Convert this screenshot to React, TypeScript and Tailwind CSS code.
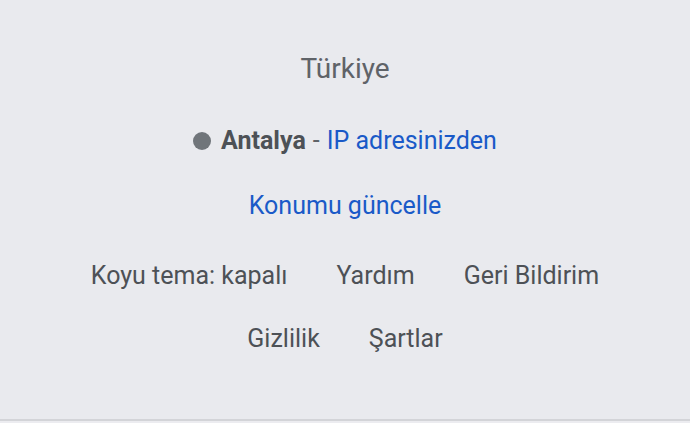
export default function App() {
  return (
    <div className="h-[423px] w-[690px] bg-[#ececf0] font-['Roboto',sans-serif]">
      <div className="flex h-[421px] flex-col items-center border-b-2 border-[#d3d4d8] bg-[#e9eaee] pt-[45px]">
        <div className="flex h-[48px] items-center text-[28px] text-[#5f6368]">Türkiye</div>

        <div className="mt-[24px] flex h-[48px] items-center text-[25px]">
          <span className="mr-[10px] inline-block h-[18px] w-[18px] rounded-full bg-[#70757a]" />
          <span className="font-bold text-[#4d5156]">Antalya</span>
          <span className="mx-[7px] text-[#5f6368]">-</span>
          <span className="text-[#1a5ac8]">IP adresinizden</span>
        </div>

        <div className="mt-[17px] flex h-[48px] items-center text-[25px] text-[#1a5ac8]">
          Konumu güncelle
        </div>

        <div className="mt-[22px] flex h-[48px] items-center gap-x-[49px] text-[25px] text-[#4d5156]">
          <span>Koyu tema: kapalı</span>
          <span>Yardım</span>
          <span>Geri Bildirim</span>
        </div>

        <div className="mt-[15px] flex h-[48px] items-center gap-x-[49px] text-[25px] text-[#4d5156]">
          <span>Gizlilik</span>
          <span>Şartlar</span>
        </div>
      </div>
    </div>
  );
}
